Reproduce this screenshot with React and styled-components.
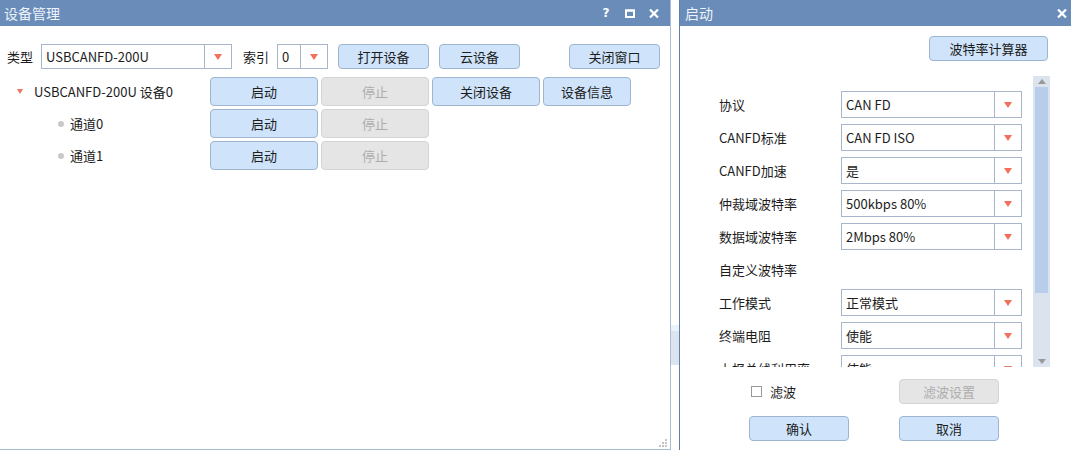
import React from 'react';
import styled, { createGlobalStyle } from 'styled-components';

const GlobalStyle = createGlobalStyle`
  html, body {
    margin: 0;
    padding: 0;
    background: #fff;
  }

  body {
    font-family: "Noto Sans CJK SC", "Noto Sans", sans-serif;
    font-size: 13px;
    color: #1c1c1c;
  }
`;

const Desktop = styled.div`
  display: flex;
  width: 1071px;
  height: 450px;
  overflow: hidden;
  background: #fff;
`;

const Window = styled.div`
  position: relative;
  display: flex;
  flex-direction: column;
  flex-shrink: 0;
  box-sizing: border-box;

  width: ${(p) => p.$width}px;
  height: 450px;

  border-left: ${(p) => (p.$dark ? '1px solid #5f80ad' : 'none')};
  border-right: ${(p) => (p.$dark ? 'none' : '1px solid #a9bcd6')};
  border-bottom: ${(p) => (p.$dark ? 'none' : '1px solid #a9bcd6')};
`;

const TitleBar = styled.div`
  display: flex;
  align-items: center;
  height: 26px;
  padding-left: ${(p) => p.$padLeft}px;
  padding-right: ${(p) => p.$padRight}px;

  background-color: #6a8cb9;
  color: #eef3fa;
  font-size: 14px;
`;

const TitleText = styled.span`
  flex: 1;
`;

const TitleIcons = styled.div`
  display: flex;
  gap: 6px;
`;

const TitleIcon = styled.span`
  display: flex;
  align-items: center;
  justify-content: center;
  width: 18px;
  height: 26px;

  color: #fff;
  font-family: "DejaVu Sans", sans-serif;
  font-weight: bold;
  font-size: 12px;
`;

const Splitter = styled.div`
  display: flex;
  flex-direction: column;
  flex-shrink: 0;
  width: 8px;
`;

const SplitterHandle = styled.div`
  margin-top: 325px;
  height: 34px;
  border-top: 6px solid #eaf3fa;
  background-color: #dbe4ef;
`;

const LeftBody = styled.div`
  display: flex;
  flex-direction: column;
  padding: 18px 10px 0 7px;
`;

const TopRow = styled.div`
  display: flex;
  align-items: center;
  height: 25px;
`;

const FieldLabel = styled.span`
  flex-shrink: 0;
  width: ${(p) => p.$width}px;
  margin-left: ${(p) => p.$ml || 0}px;
`;

const Combo = styled.div`
  display: flex;
  flex-shrink: 0;
  box-sizing: border-box;
  width: ${(p) => p.$width}px;
  height: ${(p) => p.$height}px;

  border: 1px solid #a7b6ca;
  background: #fff;
`;

const ComboText = styled.span`
  display: flex;
  align-items: center;
  flex: 1;
  padding-left: 4px;
  white-space: nowrap;
  overflow: hidden;
`;

const ComboArrow = styled.span`
  display: flex;
  align-items: center;
  justify-content: center;
  width: 26px;
  border-left: 1px solid #a7b6ca;

  &::after {
    content: '';
    border-left: 4px solid transparent;
    border-right: 4px solid transparent;
    border-top: 6px solid #f2705c;
  }
`;

const Button = styled.button`
  flex-shrink: 0;
  box-sizing: border-box;
  width: ${(p) => p.$width}px;
  height: ${(p) => p.$height || 25}px;
  margin-left: ${(p) => (p.$push ? 'auto' : `${p.$ml || 0}px`)};
  padding: 0;

  border: 1px solid #9eb5d1;
  border-radius: 4px;
  background-color: #cfe4fb;
  color: #1c1c1c;
  font-family: inherit;
  font-size: 13px;

  &:disabled {
    border-color: #d4d4d4;
    background-color: #e5e5e5;
    color: #adadad;
  }
`;

const Tree = styled.div`
  display: flex;
  flex-direction: column;
  gap: 3px;
  margin-top: 8px;
`;

const TreeRow = styled.div`
  display: flex;
  gap: 3px;
  height: 29px;
`;

const TreeLabel = styled.div`
  display: flex;
  align-items: center;
  width: 200px;
  padding-left: ${(p) => p.$indent}px;
  box-sizing: border-box;
`;

const Caret = styled.span`
  margin-right: 11px;
  border-left: 3px solid transparent;
  border-right: 3px solid transparent;
  border-top: 5px solid #f07462;
`;

const Dot = styled.span`
  width: 6px;
  height: 6px;
  margin-right: 6px;
  border-radius: 50%;
  background-color: #c9c9c9;
`;

const Grip = styled.svg`
  position: absolute;
  right: 2px;
  bottom: 1px;
`;

const CalcRow = styled.div`
  display: flex;
  justify-content: flex-end;
  padding: 10px 23px 0 0;
`;

const ScrollPanel = styled.div`
  display: flex;
  height: 291px;
  margin-top: 15px;
  padding-right: 21px;
`;

const FormViewport = styled.div`
  display: flex;
  flex-direction: column;
  gap: 6px;
  flex: 1;
  padding: 15px 11px 0 39px;
  overflow: hidden;
`;

const FormRow = styled.div`
  display: flex;
  align-items: center;
  flex-shrink: 0;
  height: 27px;
`;

const Scrollbar = styled.div`
  display: flex;
  flex-direction: column;
  align-items: center;
  width: 17px;
  padding: 3px 0;
  box-sizing: border-box;
  background-color: #dbe3ee;
`;

const ScrollArrow = styled.span`
  width: 0;
  height: 0;
  border-left: 4px solid transparent;
  border-right: 4px solid transparent;
  border-${(p) => (p.$up ? 'bottom' : 'top')}: 5px solid #999;
`;

const ScrollThumb = styled.div`
  width: 13px;
  height: 206px;
  margin-top: 3px;
  background-color: #b8cdea;
`;

const ScrollSpacer = styled.div`
  flex: 1;
`;

const BottomGrid = styled.div`
  display: grid;
  grid-template-columns: 100px 100px;
  grid-auto-rows: 25px;
  column-gap: 50px;
  row-gap: 12px;
  padding: 12px 0 0 69px;
`;

const CheckCell = styled.label`
  display: flex;
  align-items: center;
  padding-left: 2px;
`;

const CheckBox = styled.span`
  width: 9px;
  height: 9px;
  margin-right: 8px;
  border: 1px solid #9a9a9a;
  background: #fff;
`;

const formRows = [
  { label: '协议', value: 'CAN FD' },
  { label: 'CANFD标准', value: 'CAN FD ISO' },
  { label: 'CANFD加速', value: '是' },
  { label: '仲裁域波特率', value: '500kbps 80%' },
  { label: '数据域波特率', value: '2Mbps 80%' },
  { label: '自定义波特率' },
  { label: '工作模式', value: '正常模式' },
  { label: '终端电阻', value: '使能' },
  { label: '上报总线利用率', value: '使能' },
];

const channels = ['通道0', '通道1'];

function Select({ width, height, value }) {
  return (
    <Combo $width={width} $height={height}>
      <ComboText>{value}</ComboText>
      <ComboArrow />
    </Combo>
  );
}

function CloseIcon() {
  return (
    <svg width="10" height="9" viewBox="0 0 10 9">
      <path d="M1 0.5 L9 8.5 M9 0.5 L1 8.5" stroke="#fff" strokeWidth="2.2" />
    </svg>
  );
}

function MaxIcon() {
  return (
    <svg width="10" height="9" viewBox="0 0 10 9">
      <rect x="1" y="1.5" width="8" height="6.5" fill="none" stroke="#fff" strokeWidth="2" />
      <rect x="0" y="0.5" width="10" height="2" fill="#fff" />
    </svg>
  );
}

export default function App() {
  return (
    <>
      <GlobalStyle />
      <Desktop>
        <Window $width={671}>
          <TitleBar $padLeft={4} $padRight={7}>
            <TitleText>设备管理</TitleText>
            <TitleIcons>
              <TitleIcon>?</TitleIcon>
              <TitleIcon><MaxIcon /></TitleIcon>
              <TitleIcon><CloseIcon /></TitleIcon>
            </TitleIcons>
          </TitleBar>

          <LeftBody>
            <TopRow>
              <FieldLabel $width={34}>类型</FieldLabel>
              <Select width={191} height={25} value="USBCANFD-200U" />
              <FieldLabel $width={34} $ml={11}>索引</FieldLabel>
              <Select width={51} height={25} value="0" />
              <Button $width={91} $ml={10}>打开设备</Button>
              <Button $width={81} $ml={10}>云设备</Button>
              <Button $width={91} $push>关闭窗口</Button>
            </TopRow>

            <Tree>
              <TreeRow>
                <TreeLabel $indent={10}>
                  <Caret />
                  USBCANFD-200U 设备0
                </TreeLabel>
                <Button $width={108} $height={29}>启动</Button>
                <Button $width={108} $height={29} disabled>停止</Button>
                <Button $width={108} $height={29}>关闭设备</Button>
                <Button $width={88} $height={29}>设备信息</Button>
              </TreeRow>
              {channels.map((name) => (
                <TreeRow key={name}>
                  <TreeLabel $indent={51}>
                    <Dot />
                    {name}
                  </TreeLabel>
                  <Button $width={108} $height={29}>启动</Button>
                  <Button $width={108} $height={29} disabled>停止</Button>
                </TreeRow>
              ))}
            </Tree>
          </LeftBody>

          <Grip width="9" height="9" viewBox="0 0 9 9">
            <rect x="6" y="0" width="2" height="2" fill="#c4c4c4" />
            <rect x="3" y="3" width="2" height="2" fill="#c4c4c4" />
            <rect x="6" y="3" width="2" height="2" fill="#c4c4c4" />
            <rect x="0" y="6" width="2" height="2" fill="#c4c4c4" />
            <rect x="3" y="6" width="2" height="2" fill="#c4c4c4" />
            <rect x="6" y="6" width="2" height="2" fill="#c4c4c4" />
          </Grip>
        </Window>

        <Splitter>
          <SplitterHandle />
        </Splitter>

        <Window $width={392} $dark>
          <TitleBar $padLeft={5} $padRight={0}>
            <TitleText>启动</TitleText>
            <TitleIcons>
              <TitleIcon><CloseIcon /></TitleIcon>
            </TitleIcons>
          </TitleBar>

          <CalcRow>
            <Button $width={119}>波特率计算器</Button>
          </CalcRow>

          <ScrollPanel>
            <FormViewport>
              {formRows.map((row) => (
                <FormRow key={row.label}>
                  <FieldLabel $width={122}>{row.label}</FieldLabel>
                  {row.value && <Select width={181} height={27} value={row.value} />}
                </FormRow>
              ))}
            </FormViewport>
            <Scrollbar>
              <ScrollArrow $up />
              <ScrollThumb />
              <ScrollSpacer />
              <ScrollArrow />
            </Scrollbar>
          </ScrollPanel>

          <BottomGrid>
            <CheckCell>
              <CheckBox />
              滤波
            </CheckCell>
            <Button $width={100} disabled>滤波设置</Button>
            <Button $width={100}>确认</Button>
            <Button $width={100}>取消</Button>
          </BottomGrid>
        </Window>
      </Desktop>
    </>
  );
}
